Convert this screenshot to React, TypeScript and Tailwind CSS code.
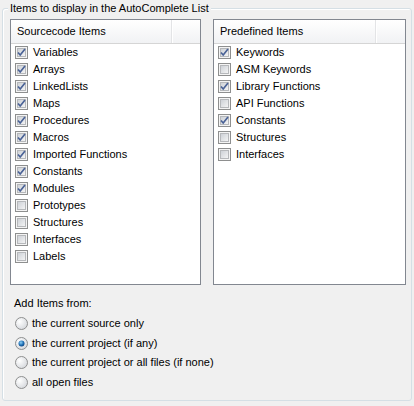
import React from "react";

type Item = { label: string; checked: boolean };

const sourceItems: Item[] = [
  { label: "Variables", checked: true },
  { label: "Arrays", checked: true },
  { label: "LinkedLists", checked: true },
  { label: "Maps", checked: true },
  { label: "Procedures", checked: true },
  { label: "Macros", checked: true },
  { label: "Imported Functions", checked: true },
  { label: "Constants", checked: true },
  { label: "Modules", checked: true },
  { label: "Prototypes", checked: false },
  { label: "Structures", checked: false },
  { label: "Interfaces", checked: false },
  { label: "Labels", checked: false },
];

const predefinedItems: Item[] = [
  { label: "Keywords", checked: true },
  { label: "ASM Keywords", checked: false },
  { label: "Library Functions", checked: true },
  { label: "API Functions", checked: false },
  { label: "Constants", checked: true },
  { label: "Structures", checked: false },
  { label: "Interfaces", checked: false },
];

const sources = [
  "the current source only",
  "the current project (if any)",
  "the current project or all files (if none)",
  "all open files",
];

const CheckBox = ({ checked }: { checked: boolean }) => (
  <svg width="13" height="13" viewBox="0 0 13 13" className="shrink-0">
    <defs>
      <linearGradient id="cbFill" x1="0" y1="0" x2="1" y2="1">
        <stop offset="0" stopColor="#cbcfd5" />
        <stop offset="1" stopColor="#f6f6f6" />
      </linearGradient>
    </defs>
    <rect x="0.5" y="0.5" width="12" height="12" fill="#f4f4f4" stroke="#8e8f8f" />
    <rect x="2.5" y="2.5" width="8" height="8" fill="url(#cbFill)" stroke="#b6b8bb" />
    {checked && (
      <path d="M3 6.5 L5.2 9 L10 3" fill="none" stroke="#4a6296" strokeWidth="1.7" />
    )}
  </svg>
);

const Radio = ({ checked }: { checked: boolean }) => (
  <svg width="13" height="13" viewBox="0 0 13 13" className="shrink-0">
    <defs>
      <radialGradient id="rdFill" cx="0.35" cy="0.35" r="0.8">
        <stop offset="0" stopColor="#ffffff" />
        <stop offset="1" stopColor="#d0d3d8" />
      </radialGradient>
      <radialGradient id="rdDot" cx="0.4" cy="0.35" r="0.7">
        <stop offset="0" stopColor="#8fd0f5" />
        <stop offset="0.6" stopColor="#1f6fb4" />
        <stop offset="1" stopColor="#0b3f7a" />
      </radialGradient>
    </defs>
    <circle cx="6.5" cy="6.5" r="6" fill="url(#rdFill)" stroke="#8e8f8f" />
    {checked && <circle cx="6.5" cy="6.5" r="3" fill="url(#rdDot)" />}
  </svg>
);

const ListBox = ({ title, items, width, sep }: { title: string; items: Item[]; width: string; sep: string }) => (
  <div className={`${width} h-[266px] border border-[#828790] bg-white`}>
    <div className="flex h-[24px] border-b border-[#d5d5d5] bg-gradient-to-b from-white to-[#f1f2f4]">
      <div className={`${sep} flex items-center pl-[6px] border-r border-[#e3e4e6] shadow-[1px_0_0_#ffffff]`}>{title}</div>
      <div className="flex-1" />
    </div>
    <div className="flex flex-col">
      {items.map((it) => (
        <div key={it.label} className="flex h-[17px] items-center gap-[5px] pl-[4px]">
          <CheckBox checked={it.checked} />
          <span>{it.label}</span>
        </div>
      ))}
    </div>
  </div>
);

const App = () => {
  return (
    <div
      className="w-[414px] h-[406px] bg-[#f0f0f0] text-[11px] text-black pt-[8px] px-[2px] leading-none"
      style={{ fontFamily: '"Liberation Sans", Arial, sans-serif' }}
    >
      <div className="relative h-[393px] rounded-[3px] border border-[#d5dfe5] shadow-[inset_1px_1px_0_#ffffff]">
        <div className="absolute -top-[7px] left-[5px] bg-[#f0f0f0] px-[2px] leading-[13px]">
          Items to display in the AutoComplete List
        </div>
        <div className="flex gap-[12px] pl-[7px] pt-[10px]">
          <ListBox title="Sourcecode Items" items={sourceItems} width="w-[191px]" sep="w-[161px]" />
          <ListBox title="Predefined Items" items={predefinedItems} width="w-[193px]" sep="w-[162px]" />
        </div>
        <div className="pl-[11px] pt-[13px]">
          <div className="h-[14px]">Add Items from:</div>
          <div className="flex flex-col pt-[2px]">
            {sources.map((s, i) => (
              <div key={s} className="flex h-[19.5px] items-center gap-[4px] pl-[1px]">
                <Radio checked={i === 1} />
                <span>{s}</span>
              </div>
            ))}
          </div>
        </div>
      </div>
    </div>
  );
};

export default App;
